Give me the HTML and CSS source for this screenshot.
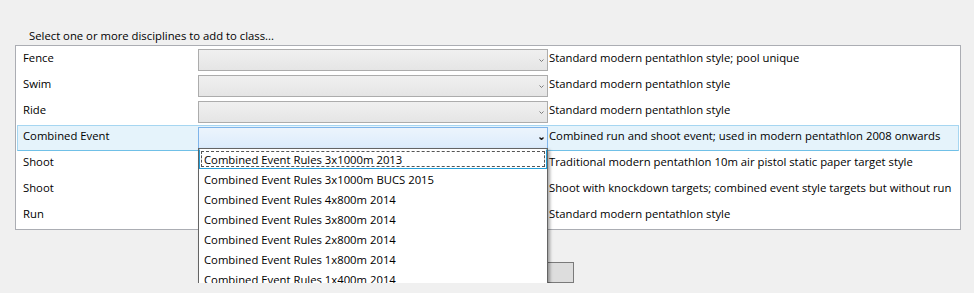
FILE: index.html
```html
<!DOCTYPE html>
<html lang="en">

<head>
    <meta charset="UTF-8">
    <title>Add disciplines</title>
    <link rel="stylesheet" href="styles.css">
</head>

<body>
    <div class="caption">Select one or more disciplines to add to class...</div>

    <div class="listbox">
        <div class="row">
            <span class="name">Fence</span>
            <span class="combo"><svg class="arrow" width="5" height="3" viewBox="0 0 5 3"><polyline points="0.5,0.5 2.5,2.5 4.5,0.5" /></svg></span>
            <span class="desc">Standard modern pentathlon style; pool unique</span>
        </div>
        <div class="row">
            <span class="name">Swim</span>
            <span class="combo"><svg class="arrow" width="5" height="3" viewBox="0 0 5 3"><polyline points="0.5,0.5 2.5,2.5 4.5,0.5" /></svg></span>
            <span class="desc">Standard modern pentathlon style</span>
        </div>
        <div class="row">
            <span class="name">Ride</span>
            <span class="combo"><svg class="arrow" width="5" height="3" viewBox="0 0 5 3"><polyline points="0.5,0.5 2.5,2.5 4.5,0.5" /></svg></span>
            <span class="desc">Standard modern pentathlon style</span>
        </div>
        <div class="row row-hover">
            <span class="name">Combined Event</span>
            <span class="combo combo-open">
                <svg class="arrow" width="5" height="3" viewBox="0 0 5 3"><polyline points="0.5,0.5 2.5,2.5 4.5,0.5" /></svg>
                <ul class="popup">
                    <li class="item item-focus">Combined Event Rules 3x1000m 2013</li>
                    <li class="item">Combined Event Rules 3x1000m BUCS 2015</li>
                    <li class="item">Combined Event Rules 4x800m 2014</li>
                    <li class="item">Combined Event Rules 3x800m 2014</li>
                    <li class="item">Combined Event Rules 2x800m 2014</li>
                    <li class="item">Combined Event Rules 1x800m 2014</li>
                    <li class="item">Combined Event Rules 1x400m 2014</li>
                </ul>
            </span>
            <span class="desc">Combined run and shoot event; used in modern pentathlon 2008 onwards</span>
        </div>
        <div class="row">
            <span class="name">Shoot</span>
            <span class="blank"></span>
            <span class="desc">Traditional modern pentathlon 10m air pistol static paper target style</span>
        </div>
        <div class="row">
            <span class="name">Shoot</span>
            <span class="blank"></span>
            <span class="desc">Shoot with knockdown targets; combined event style targets but without run</span>
        </div>
        <div class="row">
            <span class="name">Run</span>
            <span class="blank"></span>
            <span class="desc">Standard modern pentathlon style</span>
        </div>
    </div>

    <div class="actions">
        <button class="btn" type="button">Add</button>
    </div>
</body>
</html>
```

FILE: styles.css
```css
body {
    margin: 0;
    padding: 0;
    background: #f0f0f0;
    color: #000;
    font-family: "Open Sans", "Noto Sans", sans-serif;
    font-size: 11.3px;
    overflow: hidden;
}

.caption {
    padding: 27px 0 0 29px;
    height: 18px;
    line-height: 17px;
}

.listbox {
    box-sizing: border-box;
    width: 946px;
    height: 185px;
    margin-left: 15px;
    padding: 1px 1px 0;
    border: 1px solid #abadb3;
    background: #fff;
}

.row {
    display: grid;
    grid-template-columns: 179px 350px 1fr;
    column-gap: 1px;
    align-items: center;
    height: 26px;
    box-sizing: border-box;
    border: 1px solid transparent;
    line-height: 16px;
}

.row-hover {
    background: #e5f3fb;
    border-color: #a6d6f1;
    border-bottom-color: #70c0e7;
}

.name {
    padding-left: 5px;
    margin-top: -5px;
}

.desc {
    white-space: nowrap;
    margin-top: -5px;
}

.combo {
    position: relative;
    box-sizing: border-box;
    height: 22px;
    display: flex;
    align-items: center;
    justify-content: flex-end;
    padding-right: 3px;
    border: 1px solid #acacac;
    background: linear-gradient(#f0f0f0, #e5e5e5);
}

.arrow {
    fill: none;
    stroke: #7a7a7a;
    stroke-width: 1;
}

.combo-open {
    border-color: #7eb4ea;
    background: linear-gradient(#ecf4fc, #dcecfc);
}

.combo-open .arrow {
    stroke: #1a1a1a;
    stroke-width: 1.4;
}

/* dropdown list shown over the rows below */
.popup {
    position: absolute;
    top: 20px;
    left: -1px;
    z-index: 10;
    box-sizing: border-box;
    width: 350px;
    margin: 0;
    padding: 0;
    list-style: none;
    background: #fff;
    border: 1px solid #646464;
    box-shadow: 2px 2px 3px rgba(0, 0, 0, 0.35);
}

.item {
    box-sizing: border-box;
    height: 20px;
    line-height: 21px;
    padding-left: 5px;
    white-space: nowrap;
}

.item-focus {
    padding-left: 4px;
    border: 1px solid #26a0da;
    border-top-color: #fff;
    line-height: 19px;
    outline: 1px dashed #555;
    outline-offset: -3px;
}

.actions {
    margin-top: 32px;
    padding-left: 499px;
}

.btn {
    box-sizing: border-box;
    width: 75px;
    height: 21px;
    padding: 0;
    border: 1px solid #7a7a7a;
    background: #dddddd;
    font-family: inherit;
    font-size: 11.3px;
    color: #000;
}
```
